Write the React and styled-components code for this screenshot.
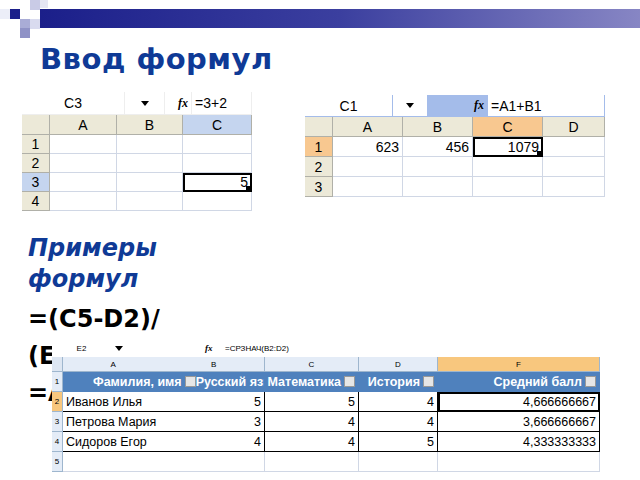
import React from "react";
import styled, { createGlobalStyle } from "styled-components";

const Global = createGlobalStyle`
  body { margin: 0; background: #fff; font-family: "DejaVu Sans", sans-serif; }
  #root { width: 640px; height: 480px; overflow: hidden; }
`;

const Slide = styled.div`
  position: relative; width: 640px; height: 480px; background: #fff; overflow: hidden;
`;
const Decor = styled.div`
  position: relative; height: 40px;
`;
const Bar = styled.div`
  position: absolute; left: 40px; right: 0; top: 9px; height: 19px;
  background: linear-gradient(90deg, #1b1f8a 0%, #3b3f9f 50%, #8786c4 100%);
`;
const Sq = styled.div`
  position: absolute; left: ${p => p.x}px; top: ${p => p.y}px; width: ${p => p.s}px; height: ${p => p.s}px; background: ${p => p.c};
`;
const Title = styled.h1`
  margin: 0 0 0 40px; height: 52px; font: bold 29px "DejaVu Sans", sans-serif; color: #0f3a96; letter-spacing: 0.5px; line-height: 38px;
`;
const SheetsRow = styled.div`
  display: flex; align-items: flex-start; padding-left: 22px; gap: 53px;
`;
const Sheet = styled.div`
  width: ${p => p.w}px; font-family: "Liberation Sans", Arial, sans-serif; font-size: ${p => p.fs || 13}px; overflow: hidden; background: #fff;
  margin-top: ${p => p.mt || 0}px;
`;
const Row = styled.div`
  display: grid; grid-template-columns: ${p => p.cols}; height: ${p => p.h}px;
`;
const Cell = styled.div`
  display: flex; align-items: center; justify-content: ${p => p.al || "flex-start"};
  padding: 0 ${p => p.pad ?? 3}px; border-right: 1px solid ${p => p.bc || "#d0d7e5"}; border-bottom: 1px solid ${p => p.bc || "#d0d7e5"};
  background: ${p => p.bg || "#fff"}; color: ${p => p.color || "#000"}; font-weight: ${p => p.b ? "bold" : "normal"};
  font-size: ${p => p.fs ? p.fs + "px" : "inherit"};
  white-space: nowrap; overflow: hidden; position: relative;
  ${p => p.sel ? "outline: 2px solid #000; outline-offset: -2px; z-index:1;" : ""}
`;
const Handle = styled.span`
  position: absolute; right: 0; bottom: 0; width: 5px; height: 5px; background: #000;
`;
const Arrow = styled.span`
  width: 0; height: 0; border-left: 4px solid transparent; border-right: 4px solid transparent; border-top: 5px solid #000;
`;
const Fx = styled.span`
  font: italic bold ${p => p.s || 12}px "Liberation Serif", serif;
`;
const TextBlock = styled.div`
  padding: 22px 0 0 28px;
`;
const Sub = styled.div`
  font: italic bold 24px "DejaVu Sans", sans-serif; color: #0f3a96; line-height: 31px;
`;
const Formula = styled.div`
  font: bold 24px "DejaVu Sans", sans-serif; color: #000; line-height: 37px; margin-top: 6px;
`;
const Overlay = styled.div`
  position: absolute; left: 52px; top: 340px; width: 548px; height: 130px; background: #fff;
`;
const Dd = styled.span`
  display: inline-block; flex: none; width: 9px; height: 9px; margin-left: 3px; background: #e6e6e6; border: 1px solid #999;
`;

const hdr = "#ece9d8";

function LeftSheet() {
  const cols = "28px 67px 66px 69px";
  return (
    <Sheet w={230} fs={14}>
      <Row cols="103px 40px 27px 60px" h={23}>
        <Cell al="center" bc="#eee">C3</Cell>
        <Cell al="center" bc="#eee"><Arrow /></Cell>
        <Cell al="flex-end" bc="#eee"><Fx>fx</Fx></Cell>
        <Cell bc="#eee">=3+2</Cell>
      </Row>
      <Row cols={cols} h={20}>
        <Cell bg={hdr} bc="#b0b0a8"></Cell>
        <Cell bg={hdr} bc="#b0b0a8" al="center">A</Cell>
        <Cell bg={hdr} bc="#b0b0a8" al="center">B</Cell>
        <Cell bg="#c5d5ef" bc="#b0b0a8" al="center">C</Cell>
      </Row>
      {[1, 2, 3, 4].map(r => (
        <Row key={r} cols={cols} h={19}>
          <Cell bg={r === 3 ? "#c5d5ef" : hdr} bc="#b0b0a8" al="center">{r}</Cell>
          <Cell /><Cell />
          <Cell al="flex-end" sel={r === 3}>{r === 3 ? "5" : ""}{r === 3 && <Handle />}</Cell>
        </Row>
      ))}
    </Sheet>
  );
}

function RightSheet() {
  const cols = "28px 70px 70px 70px 62px";
  const data = [["623", "456", "1079"], ["", "", ""], ["", "", ""]];
  return (
    <Sheet w={300} fs={14} mt={3}>
      <Row cols="88px 35px 60px 117px" h={22}>
        <Cell al="center" bc="#a4bcea">C1</Cell>
        <Cell al="center" bc="#a4bcea"><Arrow /></Cell>
        <Cell al="flex-end" bg="#a4bcea" bc="#a4bcea"><Fx>fx</Fx></Cell>
        <Cell bc="#a4bcea">=A1+B1</Cell>
      </Row>
      <Row cols={cols} h={20}>
        <Cell bg={hdr} bc="#b0b0a8"></Cell>
        <Cell bg={hdr} bc="#b0b0a8" al="center">A</Cell>
        <Cell bg={hdr} bc="#b0b0a8" al="center">B</Cell>
        <Cell bg="#f8c890" bc="#b0b0a8" al="center">C</Cell>
        <Cell bg={hdr} bc="#b0b0a8" al="center">D</Cell>
      </Row>
      {data.map((d, i) => (
        <Row key={i} cols={cols} h={20}>
          <Cell bg={i === 0 ? "#f8c890" : hdr} bc="#b0b0a8" al="center">{i + 1}</Cell>
          <Cell al="flex-end">{d[0]}</Cell>
          <Cell al="flex-end">{d[1]}</Cell>
          <Cell al="flex-end" sel={i === 0}>{d[2]}{i === 0 && <Handle />}</Cell>
          <Cell />
        </Row>
      ))}
    </Sheet>
  );
}

function BottomSheet() {
  const cols = "11px 202px 94px 79px 162px";
  const rows = [
    ["Иванов Илья", "5", "5", "4", "4,666666667"],
    ["Петрова Мария", "3", "4", "4", "3,666666667"],
    ["Сидоров Егор", "4", "4", "5", "4,333333333"],
  ];
  return (
    <Sheet w={548} fs={12.5}>
      <Row cols="60px 30px 60px 20px 378px" h={17}>
        <Cell al="center" bc="#fff" fs={8}>E2</Cell>
        <Cell bc="#fff"><Arrow /></Cell>
        <Cell bc="#fff"></Cell>
        <Cell bc="#fff"><Fx s={9}>fx</Fx></Cell>
        <Cell bc="#fff" fs={8}>=СРЗНАЧ(B2:D2)</Cell>
      </Row>
      <Row cols={cols} h={15}>
        <Cell bg="#dde6f2" bc="#9eb6ce"></Cell>
        <Cell bg="#e4ecf7" bc="#9eb6ce" fs={8} pad={0}>
          <span style={{ flex: 1, textAlign: "center" }}>A</span>
          <span style={{ flex: 1, textAlign: "center" }}>B</span>
        </Cell>
        {["C", "D", "F"].map((c, i) => (
          <Cell key={c} bg={i === 2 ? "#f8c77e" : "#e4ecf7"} bc="#9eb6ce" al="center" fs={8}>{c}</Cell>
        ))}
      </Row>
      <Row cols={cols} h={20}>
        <Cell bg="#e4ecf7" bc="#9eb6ce" al="center" fs={8} pad={0}>1</Cell>
        <Cell bg="#4f81bd" bc="#4f81bd" color="#fff" b al="space-between" pad={2}>
          <span style={{ display: "flex", alignItems: "center", paddingLeft: 28 }}>Фамилия, имя<Dd /></span>
          <span style={{ display: "flex", alignItems: "center" }}>Русский язык<Dd /></span>
        </Cell>
        <Cell bg="#4f81bd" bc="#4f81bd" color="#fff" b al="flex-end">Математика<Dd /></Cell>
        <Cell bg="#4f81bd" bc="#4f81bd" color="#fff" b al="flex-end">История<Dd /></Cell>
        <Cell bg="#4f81bd" bc="#4f81bd" color="#fff" b al="flex-end">Средний балл<Dd /></Cell>
      </Row>
      {rows.map((r, i) => (
        <Row key={i} cols={cols} h={20}>
          <Cell bg={i === 0 ? "#f8c77e" : "#e4ecf7"} bc="#9eb6ce" al="center" fs={8} pad={0}>{i + 2}</Cell>
          <Cell bc="#000" al="space-between"><span>{r[0]}</span><span>{r[1]}</span></Cell>
          <Cell bc="#000" al="flex-end">{r[2]}</Cell>
          <Cell bc="#000" al="flex-end">{r[3]}</Cell>
          <Cell bc="#000" al="flex-end" sel={i === 0}>{r[4]}</Cell>
        </Row>
      ))}
      <Row cols={cols} h={20}>
        <Cell bg="#e4ecf7" bc="#9eb6ce" al="center" fs={8} pad={0}>5</Cell>
        <Cell /><Cell /><Cell /><Cell />
      </Row>
    </Sheet>
  );
}

export default function App() {
  return (
    <Slide>
      <Global />
      <Decor>
        <Bar />
        <Sq x={10} y={9} s={10} c="#1b1f8a" />
        <Sq x={30} y={0} s={10} c="#c9cbe6" />
        <Sq x={40} y={0} s={8} c="#e5e6f3" />
        <Sq x={20} y={19} s={10} c="#a9acd6" />
        <Sq x={30} y={19} s={10} c="#d9dbef" />
        <Sq x={20} y={28} s={10} c="#8f92c6" />
        <Sq x={0} y={9} s={10} c="#eceef8" />
      </Decor>
      <Title>Ввод формул</Title>
      <SheetsRow>
        <LeftSheet />
        <RightSheet />
      </SheetsRow>
      <TextBlock>
        <Sub>Примеры<br />формул</Sub>
        <Formula>=(C5-D2)/<br />(E3+F2)<br />=A1*B3</Formula>
      </TextBlock>
      <Overlay>
        <BottomSheet />
      </Overlay>
    </Slide>
  );
}
